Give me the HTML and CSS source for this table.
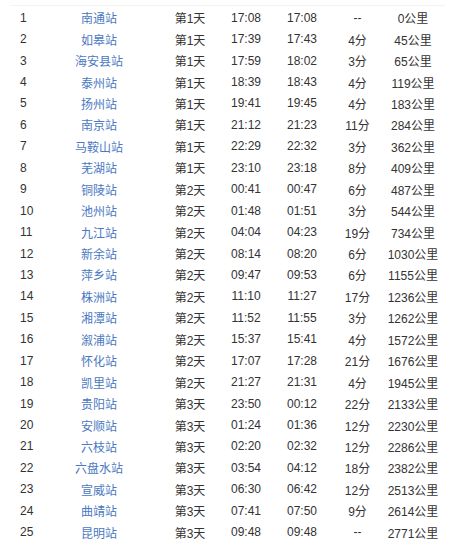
FILE: index.html
```html
<!DOCTYPE html>
<html lang="zh-CN">
<head>
<meta charset="utf-8">
<link rel="stylesheet" href="styles.css">
</head>
<body>
<div class="table">
  <div class="row"><span class="no">1</span><a class="st">南通站</a><span class="day">第1天</span><span>17:08</span><span>17:08</span><span>--</span><span>0公里</span></div>
  <div class="row"><span class="no">2</span><a class="st">如皋站</a><span class="day">第1天</span><span>17:39</span><span>17:43</span><span>4分</span><span>45公里</span></div>
  <div class="row"><span class="no">3</span><a class="st">海安县站</a><span class="day">第1天</span><span>17:59</span><span>18:02</span><span>3分</span><span>65公里</span></div>
  <div class="row"><span class="no">4</span><a class="st">泰州站</a><span class="day">第1天</span><span>18:39</span><span>18:43</span><span>4分</span><span>119公里</span></div>
  <div class="row"><span class="no">5</span><a class="st">扬州站</a><span class="day">第1天</span><span>19:41</span><span>19:45</span><span>4分</span><span>183公里</span></div>
  <div class="row"><span class="no">6</span><a class="st">南京站</a><span class="day">第1天</span><span>21:12</span><span>21:23</span><span>11分</span><span>284公里</span></div>
  <div class="row"><span class="no">7</span><a class="st">马鞍山站</a><span class="day">第1天</span><span>22:29</span><span>22:32</span><span>3分</span><span>362公里</span></div>
  <div class="row"><span class="no">8</span><a class="st">芜湖站</a><span class="day">第1天</span><span>23:10</span><span>23:18</span><span>8分</span><span>409公里</span></div>
  <div class="row"><span class="no">9</span><a class="st">铜陵站</a><span class="day">第2天</span><span>00:41</span><span>00:47</span><span>6分</span><span>487公里</span></div>
  <div class="row"><span class="no">10</span><a class="st">池州站</a><span class="day">第2天</span><span>01:48</span><span>01:51</span><span>3分</span><span>544公里</span></div>
  <div class="row"><span class="no">11</span><a class="st">九江站</a><span class="day">第2天</span><span>04:04</span><span>04:23</span><span>19分</span><span>734公里</span></div>
  <div class="row"><span class="no">12</span><a class="st">新余站</a><span class="day">第2天</span><span>08:14</span><span>08:20</span><span>6分</span><span>1030公里</span></div>
  <div class="row"><span class="no">13</span><a class="st">萍乡站</a><span class="day">第2天</span><span>09:47</span><span>09:53</span><span>6分</span><span>1155公里</span></div>
  <div class="row"><span class="no">14</span><a class="st">株洲站</a><span class="day">第2天</span><span>11:10</span><span>11:27</span><span>17分</span><span>1236公里</span></div>
  <div class="row"><span class="no">15</span><a class="st">湘潭站</a><span class="day">第2天</span><span>11:52</span><span>11:55</span><span>3分</span><span>1262公里</span></div>
  <div class="row"><span class="no">16</span><a class="st">溆浦站</a><span class="day">第2天</span><span>15:37</span><span>15:41</span><span>4分</span><span>1572公里</span></div>
  <div class="row"><span class="no">17</span><a class="st">怀化站</a><span class="day">第2天</span><span>17:07</span><span>17:28</span><span>21分</span><span>1676公里</span></div>
  <div class="row"><span class="no">18</span><a class="st">凯里站</a><span class="day">第2天</span><span>21:27</span><span>21:31</span><span>4分</span><span>1945公里</span></div>
  <div class="row"><span class="no">19</span><a class="st">贵阳站</a><span class="day">第3天</span><span>23:50</span><span>00:12</span><span>22分</span><span>2133公里</span></div>
  <div class="row"><span class="no">20</span><a class="st">安顺站</a><span class="day">第3天</span><span>01:24</span><span>01:36</span><span>12分</span><span>2230公里</span></div>
  <div class="row"><span class="no">21</span><a class="st">六枝站</a><span class="day">第3天</span><span>02:20</span><span>02:32</span><span>12分</span><span>2286公里</span></div>
  <div class="row"><span class="no">22</span><a class="st">六盘水站</a><span class="day">第3天</span><span>03:54</span><span>04:12</span><span>18分</span><span>2382公里</span></div>
  <div class="row"><span class="no">23</span><a class="st">宣威站</a><span class="day">第3天</span><span>06:30</span><span>06:42</span><span>12分</span><span>2513公里</span></div>
  <div class="row"><span class="no">24</span><a class="st">曲靖站</a><span class="day">第3天</span><span>07:41</span><span>07:50</span><span>9分</span><span>2614公里</span></div>
  <div class="row"><span class="no">25</span><a class="st">昆明站</a><span class="day">第3天</span><span>09:48</span><span>09:48</span><span>--</span><span>2771公里</span></div>
</div>
</body>
</html>
```
FILE: styles.css
```css
html, body {
  margin: 0;
  padding: 0;
  background: #ffffff;
}

body {
  font-family: "Liberation Sans", "Noto Sans CJK SC", sans-serif;
  font-size: 12px;
  color: #333333;
}

.table {
  margin: 5px 5px 0 10px;
  padding-top: 1px;
  border-top: 1px solid #f3f3f3;
}

.row {
  display: grid;
  grid-template-columns: 61px 56px 91px 56px 56px 55px 56px;
  height: 21.45px;
  align-items: center;
  text-align: center;
  white-space: nowrap;
}

.row > * {
  display: block;
}

.no {
  text-align: left;
  padding-left: 10px;
}

.st {
  color: #4a78c2;
  text-decoration: none;
}

.day {
  padding-left: 35px;
}
```
